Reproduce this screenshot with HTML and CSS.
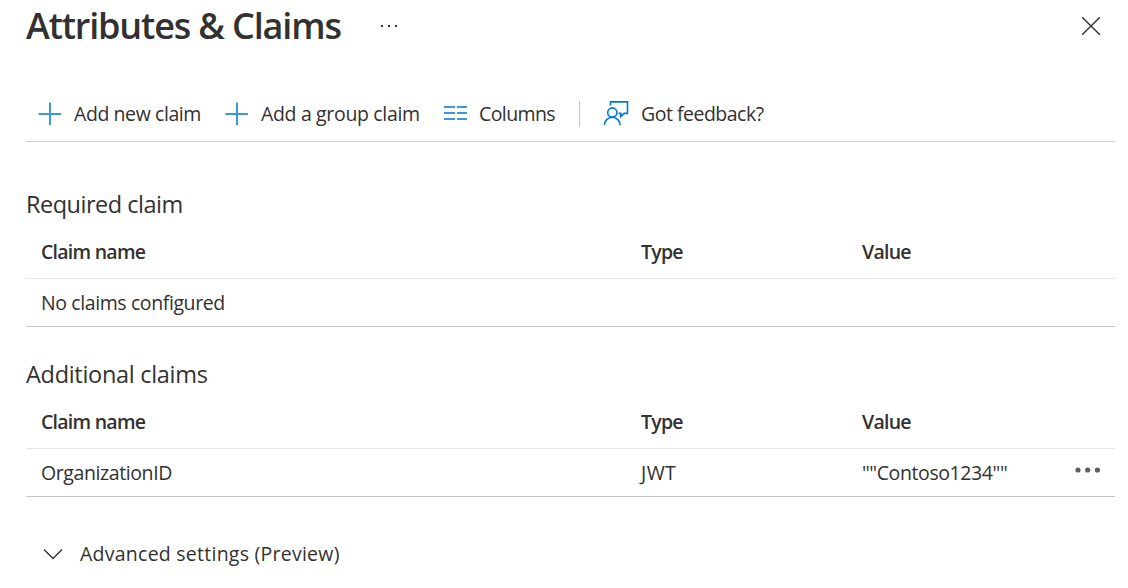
FILE: index.html
```html
<!DOCTYPE html>
<html lang="en">
<head>
<meta charset="utf-8">
<title>Attributes &amp; Claims</title>
<link rel="stylesheet" href="styles.css">
</head>
<body>
<main class="blade">
  <header class="blade-header">
    <h1 class="title">Attributes &amp; Claims</h1>
    <svg class="title-more" width="18" height="4" viewBox="0 0 18 4" fill="#323130"><path d="M1 1h2v2H1zM8 1h2v2H8zM15 1h2v2h-2z"/></svg>
    <svg class="close" width="20" height="20" viewBox="0 0 20 20" fill="none" stroke="#323130" stroke-width="1.4"><path d="M1.2 1.2l17.6 17.6M18.8 1.2L1.2 18.8"/></svg>
  </header>
  <nav class="toolbar">
    <div class="command add">
      <svg width="24" height="24" viewBox="0 0 24 24" stroke="#3a96dd" stroke-width="2"><path d="M12 .5v22.500M.5 12H23"/></svg>
      <span class="label label-new">Add new claim</span>
    </div>
    <div class="command group">
      <svg width="24" height="24" viewBox="0 0 24 24" stroke="#3a96dd" stroke-width="2"><path d="M12 .5v22.500M.5 12H23"/></svg>
      <span class="label label-group">Add a group claim</span>
    </div>
    <div class="command columns">
      <svg width="24" height="24" viewBox="0 0 24 24" stroke="#3a96dd" stroke-width="2"><path d="M1 5h11M14 5h11M1 11h11M14 11h11M1 17h11M14 17h11"/></svg>
      <span class="label label-columns">Columns</span>
    </div>
    <div class="divider"></div>
    <div class="command feedback">
      <svg width="26" height="26" viewBox="0 0 26 26" fill="none" stroke="#0078d4" stroke-width="1.6"><path d="M7.500 4.500V.9h17v11.500h-3.200L17.800 15.700v-3.300h-2.300"/><circle cx="9.300" cy="11.500" r="4.600"/><path d="M1.500 24.300c0-4.500 3.300-8 7.700-8s7.900 3.500 7.900 8"/></svg>
      <span class="label label-feedback">Got feedback?</span>
    </div>
  </nav>
  <section class="claims">
    <h2 class="section-title required">Required claim</h2>
    <div class="row head"><span>Claim name</span><span>Type</span><span>Value</span></div>
    <div class="row"><span>No claims configured</span></div>
  </section>
  <section class="claims">
    <h2 class="section-title additional">Additional claims</h2>
    <div class="row head"><span>Claim name</span><span>Type</span><span>Value</span></div>
    <div class="row"><span>OrganizationID</span><span class="type">JWT</span><span class="value">""Contoso1234""</span>
      <svg class="row-more" width="26" height="6" viewBox="0 0 26 6" fill="#605e5c"><circle cx="3" cy="3" r="2.600"/><circle cx="12.700" cy="3" r="2.600"/><circle cx="22.400" cy="3" r="2.600"/></svg>
    </div>
  </section>
  <div class="advanced">
    <svg width="20" height="12" viewBox="0 0 20 12" fill="none" stroke="#323130" stroke-width="1.400"><path d="M1 1.500l9 9 9-9"/></svg>
    <span class="label-advanced">Advanced settings (Preview)</span>
  </div>
</main>
</body>
</html>
```
FILE: styles.css
```css
* { box-sizing: border-box; }
body {
  margin: 0;
  background: #fff;
  color: #323130;
  font-family: "Segoe UI", "Open Sans", "Noto Sans", sans-serif;
  font-size: 19.5px;
  line-height: 28px;
}
.blade { width: 1128px; height: 588px; padding: 0 13px 0 26px; overflow: hidden; }
svg { display: block; flex: none; }
.blade-header { display: flex; align-items: center; height: 52px; }
.title { margin: 0; width: 354px; font-size: 36px; font-weight: 600; line-height: 52px; letter-spacing: -1.15px; white-space: nowrap; }
.close { margin-left: auto; margin-right: 14px; }
.toolbar { display: flex; align-items: center; height: 90px; padding: 34px 0 0 12px; border-bottom: 1px solid #d2d0ce; white-space: nowrap; }
.command { display: flex; align-items: center; gap: 12px; }
.add { width: 187px; }
.group { width: 218px; }
.columns { width: 136px; }
.divider { width: 1px; height: 26px; background: #c8c6c4; margin-right: 23px; }
.label-new { letter-spacing: -.42px; }
.label-group { letter-spacing: -.34px; }
.label-columns { letter-spacing: -.6px; }
.label-feedback { letter-spacing: -.5px; }
.label-advanced { letter-spacing: .25px; padding-top: 1px; }
.claims { padding-top: 44px; }
.claims + .claims { padding-top: 29px; }
.section-title { margin: 0; font-size: 23.5px; font-weight: 400; line-height: 37px; }
.required { letter-spacing: -.5px; }
.additional { letter-spacing: -.3px; }
.row { display: grid; grid-template-columns: 600px 221px 213px 1fr; align-items: center; height: 48px; padding-left: 15px; border-bottom: 1px solid #c8c6c4; letter-spacing: -.4px; }
.row.head { height: 56px; padding-top: 2px; font-weight: 600; border-bottom-color: #e5e5e5; letter-spacing: -.75px; }
.type { letter-spacing: .4px; }
.row-more { margin-bottom: 5px; }
.advanced { display: flex; align-items: center; gap: 17px; padding: 42px 0 0 17px; }
```
